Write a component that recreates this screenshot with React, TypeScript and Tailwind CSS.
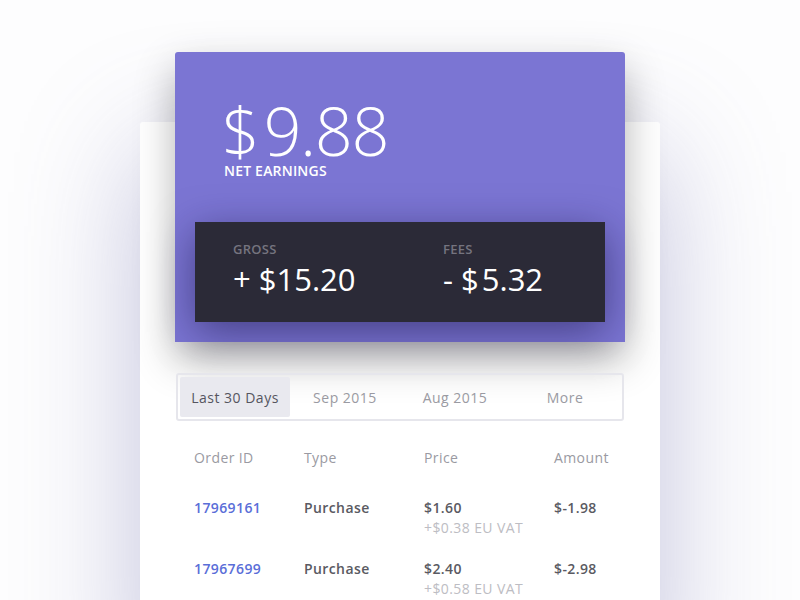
import React from "react";

const rows = [
  { id: "17969161", type: "Purchase", price: "$1.60", vat: "+$0.38 EU VAT", amount: "$-1.98" },
  { id: "17967699", type: "Purchase", price: "$2.40", vat: "+$0.58 EU VAT", amount: "$-2.98" },
];

export default function App() {
  return (
    <div
      className="w-[800px] h-[600px] overflow-hidden bg-[#fdfdfe] flex justify-center"
      style={{ fontFamily: '"Open Sans", "Noto Sans", sans-serif' }}
    >
      <div className="mt-[122px] w-[520px] h-[560px] shrink-0 bg-white rounded-t-[3px] shadow-[0_30px_120px_rgba(100,100,165,0.38)] flex flex-col items-center">
        <div className="-mt-[70px] w-[450px] h-[290px] shrink-0 bg-[#7b75d3] rounded-t-[3px] shadow-[0_18px_40px_rgba(0,0,0,0.3)] flex flex-col">
          <div className="pl-[47px] pt-[46px] text-white">
            <div className="text-[66px] leading-[64px] font-light tracking-[-1px]">
              <span className="mr-[5px]">$</span>9.88
            </div>
            <div className="text-[14px] font-semibold leading-[18px] pl-[2px] tracking-[0.2px]">NET EARNINGS</div>
          </div>
          <div className="mt-auto mb-[20px] mx-[20px] h-[100px] bg-[#2b2a37] shadow-[0_10px_40px_rgba(25,20,70,0.55)] flex pl-[38px] pt-[18px]">
            <div className="w-[210px]">
              <div className="text-[13px] font-semibold text-[#75747f] leading-[18px] tracking-[0.3px]">GROSS</div>
              <div className="text-[31px] text-white leading-[42px]">+ $15.20</div>
            </div>
            <div>
              <div className="text-[13px] font-semibold text-[#75747f] leading-[18px] tracking-[0.3px]">FEES</div>
              <div className="text-[31px] text-white leading-[42px]">- $<span className="ml-[3px]">5.32</span></div>
            </div>
          </div>
        </div>

        <div className="mt-[31px] w-[448px] h-[48px] border-2 border-[#e6e6ec] rounded-[3px] p-[2px] flex items-center text-[14px] tracking-[0.5px]">
          <div className="h-[40px] w-[110px] bg-[#e9e9ef] rounded-[2px] flex items-center justify-center text-[#555560]">Last 30 Days</div>
          <div className="w-[110px] text-center text-[#9a9aa2]">Sep 2015</div>
          <div className="w-[110px] text-center text-[#9a9aa2]">Aug 2015</div>
          <div className="w-[110px] text-center text-[#9a9aa2]">More</div>
        </div>

        <div className="w-[520px] pl-[54px] mt-[26px] text-[14px] tracking-[0.4px]">
          <div className="flex text-[#9a9aa2] h-[20px] items-center">
            <div className="w-[110px]">Order ID</div>
            <div className="w-[120px]">Type</div>
            <div className="w-[130px]">Price</div>
            <div>Amount</div>
          </div>
          {rows.map((r, i) => (
            <div key={r.id} className={`flex font-semibold ${i === 0 ? "mt-[31px]" : "mt-[21px]"}`}>
              <div className="w-[110px] text-[#5a6ed8] leading-[20px]">{r.id}</div>
              <div className="w-[120px] text-[#5a5a62] leading-[20px]">{r.type}</div>
              <div className="w-[130px]">
                <div className="text-[#5a5a62] leading-[20px]">{r.price}</div>
                <div className="text-[#bdbdc3] font-normal leading-[20px]">{r.vat}</div>
              </div>
              <div className="text-[#5a5a62] leading-[20px]">{r.amount}</div>
            </div>
          ))}
        </div>
      </div>
    </div>
  );
}
